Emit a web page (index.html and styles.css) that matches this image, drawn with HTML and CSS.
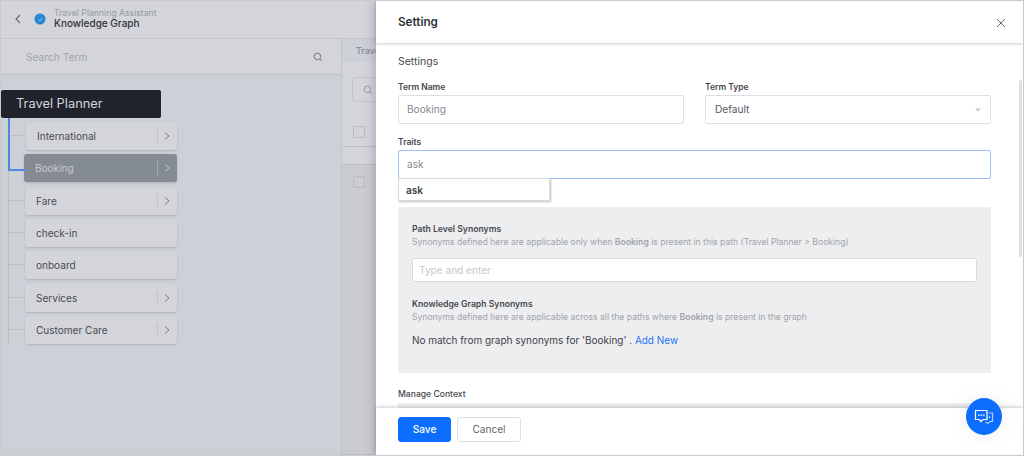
FILE: index.html
```html
<!DOCTYPE html>
<html lang="en">
<head>
<meta charset="utf-8">
<title>Knowledge Graph</title>
<link rel="stylesheet" href="styles.css">
</head>
<body>
<div class="app">
  <header class="topbar">
    <svg class="back" viewBox="0 0 8 10"><path d="M6 1L2 5l4 4"/></svg>
    <svg class="logo" viewBox="0 0 12 12"><circle cx="6" cy="6" r="5.500" fill="#2785d5"/><path d="M4.500 7.200C6 7 7.400 6 8.800 3.800C9 6 7.800 8 5.800 8.300z" fill="#65a9df"/><path d="M3.500 7.200l2.500-.6L8.600 4" fill="none" stroke="#8fbde3" stroke-width=".4"/></svg>
    <div class="titles">
      <div class="bot-name">Travel Planning Assistant</div>
      <div class="page-name">Knowledge Graph</div>
    </div>
  </header>
  <div class="workspace">
    <aside class="side">
      <div class="search"><span>Search Term</span><svg class="lens" viewBox="0 0 10 10"><circle cx="4.400" cy="4.400" r="3.300"/><path d="M7 7l2 2"/></svg></div>
      <div class="root">Travel Planner</div>
      <ul class="tree">
        <li class="node first"><span>International</span><i class="more"><svg viewBox="0 0 6 8"><path d="M1 .5L5 4 1 7.500"/></svg></i></li>
        <li class="node selected"><span>Booking</span><i class="more"><svg viewBox="0 0 6 8"><path d="M1 .5L5 4 1 7.500"/></svg></i></li>
        <li class="node"><span>Fare</span><i class="more"><svg viewBox="0 0 6 8"><path d="M1 .5L5 4 1 7.500"/></svg></i></li>
        <li class="node"><span>check-in</span></li>
        <li class="node"><span>onboard</span></li>
        <li class="node"><span>Services</span><i class="more"><svg viewBox="0 0 6 8"><path d="M1 .5L5 4 1 7.500"/></svg></i></li>
        <li class="node"><span>Customer Care</span><i class="more"><svg viewBox="0 0 6 8"><path d="M1 .5L5 4 1 7.500"/></svg></i></li>
      </ul>
    </aside>
    <main class="list">
      <div class="crumb">Travel Planner</div>
      <div class="filter"><svg class="lens" viewBox="0 0 10 10"><circle cx="4.400" cy="4.400" r="3.300"/><path d="M7 7l2 2"/></svg></div>
      <div class="row head"><b class="check"></b></div>
      <div class="row band"></div>
      <div class="row rest"><b class="check"></b></div>
    </main>
  </div>

  <section class="drawer">
    <header class="drawer-head"><h1>Setting</h1><svg class="close" viewBox="0 0 10 10"><path d="M1 1l8 8M9 1L1 9"/></svg></header>
    <div class="drawer-body">
      <h2>Settings</h2>
      <div class="fields">
        <div class="field"><div class="label">Term Name</div><div class="input">Booking</div></div>
        <div class="field"><div class="label">Term Type</div><div class="input select"><span>Default</span><svg class="caret" viewBox="0 0 6 4"><path d="M0 .5h6L3 3.500z"/></svg></div></div>
      </div>
      <div class="field traits">
        <div class="label">Traits</div>
        <div class="input focus">ask</div>
        <div class="menu">ask</div>
      </div>
      <div class="synonyms">
        <div class="label wide">Path Level Synonyms</div>
        <div class="hint">Synonyms defined here are applicable only when <b>Booking</b> is present in this path (Travel Planner &gt; Booking)</div>
        <div class="entry"><span>Type and enter</span></div>
        <div class="label wide">Knowledge Graph Synonyms</div>
        <div class="hint">Synonyms defined here are applicable across all the paths where <b>Booking</b> is present in the graph</div>
        <div class="match"><span>No match from graph synonyms for 'Booking' . </span><a>Add New</a></div>
      </div>
      <div class="label context">Manage Context</div>
      <div class="context-box"></div>
      <div class="scrollbar"></div>
    </div>
    <footer class="drawer-foot"><button class="btn primary"><span>Save</span></button><button class="btn"><span>Cancel</span></button></footer>
    <div class="chat"><svg viewBox="0 0 20 16"><g fill="none" stroke="#fff" stroke-width="1.200"><path d="M1.500 1.500h11.500v9H8.800L7 12.500 5.200 10.500H1.500z"/><path d="M14.500 4h4v8.500h-2.300L13.500 14.500 11.500 12.600" opacity=".65"/></g><path d="M4 5.400h1.500v1.300H4zM6.500 5.400H8v1.300H6.500zM9 5.400h1.500v1.300H9zM14.800 7.500h1.200v1.400h-1.200z" fill="#fff"/></svg></div>
  </section>
</div>
</body>
</html>
```
FILE: styles.css
```css
* { box-sizing: border-box; }
body { margin: 0; font-family: Inter, "Liberation Sans", sans-serif; color: #3d4148; }
h1, h2, ul { margin: 0; padding: 0; }
.app {
  position: relative;
  width: 1024px;
  height: 456px;
  overflow: hidden;
  display: flex;
  flex-direction: column;
  background: #d4d5da;
  border: 1px solid #cacbcd;
}
.topbar { height: 38px; flex: none; display: flex; align-items: flex-start; border-bottom: 1px solid #c5c7cb; }
.back { width: 8px; height: 10px; margin: 13px 0 0 13px; fill: none; stroke: #65696f; stroke-width: 1.100; }
.logo { width: 12px; height: 12px; margin: 12px 0 0 12px; }
.titles { margin: 6px 0 0 8px; white-space: nowrap; }
.bot-name { font-size: 8.660px; line-height: 12px; color: #969aa2; }
.page-name { font-size: 10px; line-height: 9px; font-weight: 500; color: #303338; }
.workspace { flex: 1; display: flex; min-height: 0; }
.side { width: 341px; flex: none; background: #cdd0d7; border-right: 1px solid #c1c4c9; }
.search {
  height: 36px;
  display: flex;
  align-items: center;
  justify-content: space-between;
  padding: 1px 18px 0 25px;
  background: #d4d5da;
  border-bottom: 1px solid #bfc1c5;
  font-size: 10.200px;
  color: #a0a3aa;
}
.lens { width: 10px; height: 10px; fill: none; stroke: #74777d; stroke-width: 1; }
.root {
  width: 160px;
  height: 28px;
  margin-top: 15px;
  padding-left: 15px;
  border-radius: 2px;
  background: #20232b;
  color: #d4d5da;
  font-size: 12.850px;
  line-height: 28px;
}
.tree {
  position: relative;
  width: 169px;
  margin-left: 7px;
  padding: 4px 0 0 16px;
  list-style: none;
  display: flex;
  flex-direction: column;
  gap: 4.350px;
  border-left: 1px solid #bcbec4;
}
.node {
  position: relative;
  height: 28px;
  display: flex;
  align-items: center;
  justify-content: space-between;
  padding-left: 11px;
  border-radius: 3px;
  background: #d4d5da;
  box-shadow: 0 1px 2px rgba(40, 45, 60, .18);
  font-size: 10.050px;
  color: #494c53;
}
.node::before { content: ""; position: absolute; left: -16px; top: 13px; width: 16px; height: 1px; background: #bcbec4; }
.node.first { margin-left: 1px; }
.node.selected { margin-left: -1px; background: #858b94; color: #c7cad0; }
.node.selected::before { left: -16px; top: -36px; height: 51px; width: 16px; background: none; border: solid #4f88e0; border-width: 0 0 2px 2px; }
.more { width: 20px; height: 14px; display: flex; align-items: center; padding-left: 6px; border-left: 1px solid #c0c2c7; }
.more svg { width: 6px; height: 8px; fill: none; stroke: #777a81; stroke-width: 1; }
.selected .more svg { stroke: #bfc2c8; }
.selected .more { border-color: #a4a8b0; }
.list { flex: 1; display: flex; flex-direction: column; }
.crumb { height: 23px; padding-left: 14px; background: #cdd0d7; font-size: 9px; line-height: 24px; font-weight: 500; color: #858991; }
.filter { width: 120px; height: 25px; margin: 15px 0 0 10px; padding: 7px 10px; border: 1px solid #c3c5c9; border-radius: 3px; }
.filter .lens { display: block; stroke: #989ba1; }
.row { padding-left: 11px; border-bottom: 1px solid #bdbfc3; }
.head { height: 45px; padding-top: 24px; }
.band { height: 18px; }
.rest { flex: 1; padding-top: 11px; background: #cbccd0; }
.check { display: block; width: 12px; height: 12px; border: 1px solid #b9bbc0; border-radius: 2px; }
.drawer {
  position: absolute;
  z-index: 2;
  inset: 0 0 0 375px;
  display: flex;
  flex-direction: column;
  background: #fff;
  box-shadow: -2px 0 10px rgba(50, 55, 70, .25);
}
.drawer-head {
  height: 42px;
  flex: none;
  display: flex;
  align-items: center;
  justify-content: space-between;
  padding: 0 17px 0 22px;
  box-shadow: 0 1px 3px rgba(0, 0, 0, .2);
}
h1 { font-size: 11.700px; font-weight: 600; color: #303338; }
.close { width: 10px; height: 10px; margin-top: 1px; fill: none; stroke: #65676b; stroke-width: 1; }
.drawer-body { position: relative; flex: 1; min-height: 0; overflow: hidden; padding: 10px 32px 0 22px; }
h2 { height: 16px; font-size: 10.500px; line-height: 17px; font-weight: 400; color: #494c52; }
.fields { display: grid; grid-template-columns: 286px 286px; justify-content: space-between; margin-top: 12px; }
.label { font-size: 8.500px; line-height: 12px; font-weight: 600; color: #45484d; }
.label.wide { font-size: 8.650px; }
.input {
  height: 29px;
  margin-top: 2px;
  padding: 0 8px;
  border: 1px solid #dddfe2;
  border-radius: 2px;
  font-size: 10.100px;
  line-height: 27px;
  color: #85888d;
}
.select { display: flex; align-items: center; justify-content: space-between; padding: 0 9px; color: #55585d; }
.caret { width: 6px; height: 4px; fill: #c0c4ca; }
.traits { position: relative; margin-top: 12px; }
.focus { border-color: #98bdf7; }
.menu {
  position: absolute;
  z-index: 1;
  top: 42px;
  left: 0;
  width: 152px;
  height: 23px;
  padding-left: 7px;
  background: #fff;
  border: 1px solid #dadbdd;
  box-shadow: 1px 1px 2px rgba(0, 0, 0, .25);
  font-size: 10px;
  line-height: 22px;
  font-weight: 600;
}
.synonyms { height: 166px; margin-top: 28px; padding: 16px 14px 0; background: #edeef0; border-radius: 2px; white-space: nowrap; }
.hint { padding-top: 1px; font-size: 8.620px; line-height: 13px; color: #a1a4a9; }
.hint b { font-weight: 600; }
.entry { height: 24px; margin: 9px 0 16px; padding-left: 6px; background: #fff; border: 1px solid #d8dadd; border-radius: 2px; font-size: 10.100px; line-height: 22px; color: #c5c8cc; }
.match { margin-top: 8px; font-size: 9.980px; line-height: 16px; white-space: pre; }
.match a { color: #2475f5; }
.context { margin-top: 15px; font-weight: 500; font-size: 8.600px; }
.context-box { height: 20px; margin-top: 3px; background: #edeef0; }
.scrollbar { position: absolute; top: 37px; right: 1px; width: 3px; height: 177px; background: #dedfe1; border-radius: 2px; }
.drawer-foot { position: relative; height: 47px; flex: none; display: flex; gap: 6px; padding: 9px 22px; background: #fff; box-shadow: 0 -1px 4px rgba(0, 0, 0, .2); }
.btn { width: 64px; height: 25px; padding: 0; border: 1px solid #dddfe1; border-radius: 3px; background: #fff; font: 400 10.100px/23px Inter, sans-serif; color: #65686d; }
.primary { width: 53px; border-color: #0d6efd; background: #0d6efd; color: #fff; font-weight: 500; }
.chat { position: absolute; right: 21px; bottom: 20px; width: 36px; height: 37px; border-radius: 50%; display: flex; align-items: center; justify-content: center; background: #0d6efd; box-shadow: 0 0 22px rgba(0, 0, 0, .08); }
.chat svg { width: 20px; height: 16px; }
```
